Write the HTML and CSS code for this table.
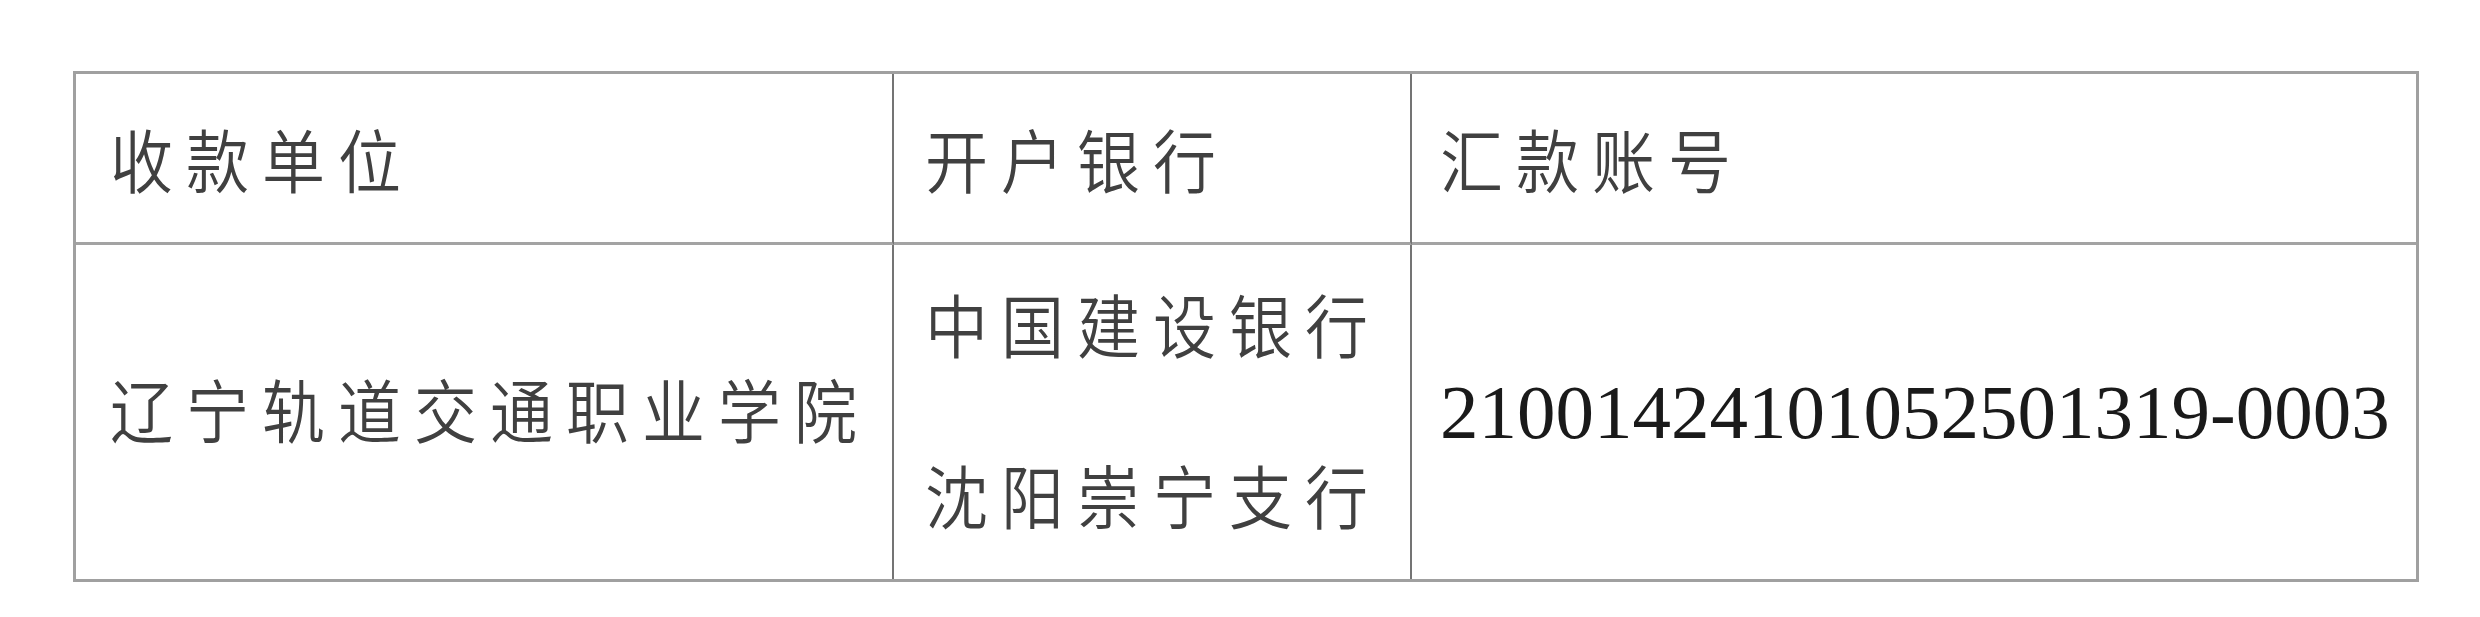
FILE: index.html
```html
<!DOCTYPE html>
<html lang="zh-CN">
<head>
<meta charset="utf-8">
<title>汇款信息</title>
<link rel="stylesheet" href="styles.css">
</head>
<body>
<div class="page">
  <div class="pay-table">
    <div class="cell head c1"><span class="zh">收款单位</span></div>
    <div class="cell head c2"><span class="zh">开户银行</span></div>
    <div class="cell head c3"><span class="zh">汇款账号</span></div>
    <div class="cell body c1"><span class="zh">辽宁轨道交通职业学院</span></div>
    <div class="cell body c2 bank">
      <div class="line"><span class="zh">中国建设银行</span></div>
      <div class="line"><span class="zh">沈阳崇宁支行</span></div>
    </div>
    <div class="cell body c3"><span class="num">21001424101052501319-0003</span></div>
  </div>
</div>
</body>
</html>
```

FILE: styles.css
```css
html, body {
  margin: 0;
  padding: 0;
  background: #ffffff;
}

.page {
  padding: 71px 0 0 73px;
}

.pay-table {
  box-sizing: border-box;
  width: 2346px;
  height: 511px;
  border: 3px solid #a0a0a0;
  display: grid;
  grid-template-columns: 818px 518px 1004px;
  grid-template-rows: 171px 334px;
}

.cell {
  box-sizing: border-box;
  display: flex;
  flex-direction: column;
  justify-content: center;
  align-items: flex-start;
  overflow: visible;
}

.head {
  border-bottom: 3px solid #a3a3a3;
}

.c1, .c2 {
  border-right: 2px solid #747474;
}

.c1 { padding-left: 34px; }
.c2 { padding-left: 31px; }
.c3 { padding-left: 28px; }

.body.c1 { padding-bottom: 8px; }

.bank {
  gap: 91px;
  padding-bottom: 8px;
}

.line {
  line-height: 80px;
  height: 80px;
}

.zh {
  display: inline-block;
  font-family: "Noto Sans CJK SC", "Noto Sans", sans-serif;
  font-weight: 350;
  font-size: 63px;
  letter-spacing: 13px;
  line-height: 80px;
  color: #404040;
  transform: scaleY(1.1);
  white-space: nowrap;
}

.num {
  font-family: "Liberation Serif", "Times New Roman", serif;
  font-size: 77px;
  line-height: 90px;
  color: #1a1a1a;
  white-space: nowrap;
}
```
